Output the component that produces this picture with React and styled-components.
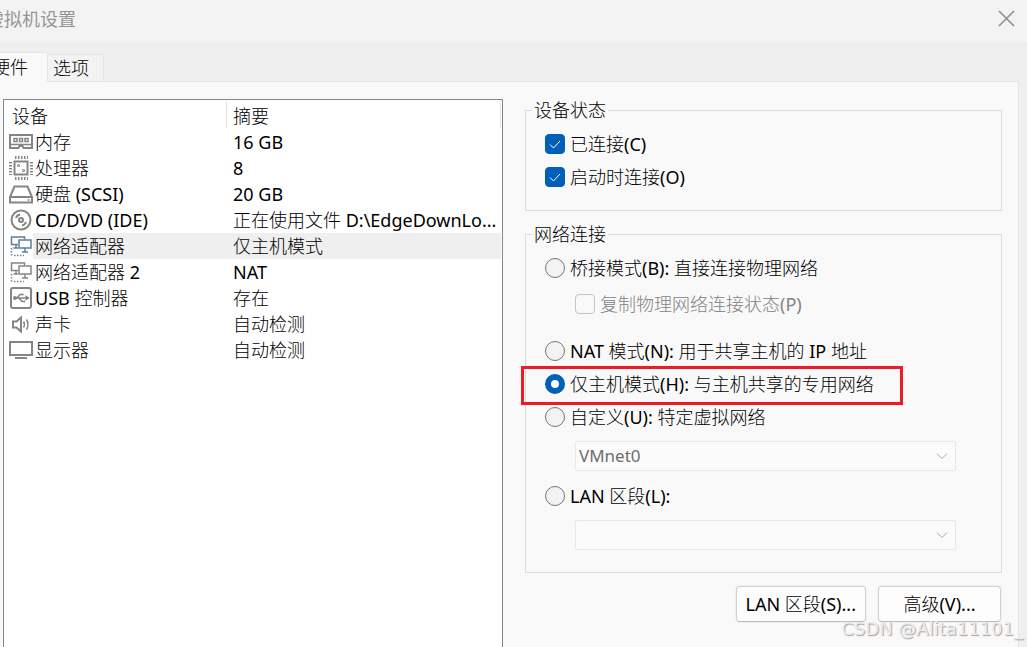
import React, { useState } from 'react';
import styled, { createGlobalStyle } from 'styled-components';

const uiFont = '"Noto Sans", "Noto Sans CJK SC Light", "Noto Sans CJK SC", sans-serif';
const line = '#dcdcdc';
const accent = '#005fb8';

const GlobalStyle = createGlobalStyle`
    * {
        box-sizing: border-box;
    }
    body {
        margin: 0;
        background-color: #efefef;
        color: #000;
        font-family: ${uiFont};
        font-size: 18px;
        line-height: 26px;
        overflow: hidden;
    }
    input, select, button {
        margin: 0;
        font: inherit;
        color: inherit;
    }
`;

const Dialog = styled.div`
    position: relative;
    display: flex;
    flex-direction: column;
    height: 100vh;
    margin-left: -16px;
`;

const TitleBar = styled.header`
    display: flex;
    align-items: center;
    justify-content: space-between;
    height: 41px;
    padding: 0 12px 4px 2px;
    background-color: #f3f3f3;
    color: #959595;
`;

const Title = styled.h1`
    margin: 0 0 2px;
    font-size: 18px;
    font-weight: 400;
    font-family: "Noto Sans CJK SC", sans-serif;
`;

const CloseButton = styled.button`
    display: flex;
    padding: 0;
    border: 0;
    background: none;
`;

const TabBar = styled.div`
    display: flex;
    align-items: flex-end;
    height: 41px;
    margin: 0 4px -1px;
    position: relative;
`;

const Tab = styled.button`
    height: ${props => props.$active ? 30 : 28}px;
    padding: 0 ${props => props.$active ? 19 : 14}px 0 ${props => props.$active ? 3 : 5}px;
    border: 1px solid #e5e5e5;
    border-left-width: ${props => props.$active ? 1 : 0}px;
    border-bottom-color: ${props => props.$active ? '#f9f9f9' : '#e5e5e5'};
    background-color: ${props => props.$active ? '#f9f9f9' : '#f3f3f3'};
`;

const Panel = styled.main`
    flex: 1;
    display: grid;
    grid-template-columns: minmax(0, 500fr) minmax(0, 477fr);
    column-gap: 22px;
    min-height: 0;
    margin: 0 8px 0 4px;
    padding: 17px 16px 0 14px;
    border: 1px solid #e5e5e5;
    border-bottom: 0;
    background-color: #f9f9f9;
`;

const DeviceList = styled.div`
    padding-right: 1px;
    border: 1px solid #828790;
    border-bottom: 0;
    background-color: #fff;
`;

const DeviceTable = styled.table`
    width: 100%;
    table-layout: fixed;
    border-collapse: collapse;
`;

const HeadCell = styled.th`
    width: ${props => props.$width || 'auto'};
    height: 29px;
    padding: 2px 6px 0 ${props => props.$indent}px;
    background: linear-gradient(#e5e5e5, #e5e5e5) right 1px / 1px 27px no-repeat;
    font-weight: 400;
    text-align: left;
`;

const DeviceRow = styled.tr`
    background: ${props => props.$selected ? 'linear-gradient(#efefef, #efefef) 29px 0 no-repeat' : 'none'};
    cursor: default;
`;

const Cell = styled.td`
    height: 26px;
    padding: 0 2px 0 ${props => props.$indent}px;
    overflow: hidden;
    white-space: nowrap;
    text-overflow: ellipsis;
`;

const DeviceName = styled.div`
    display: flex;
    align-items: center;
    gap: 2px;
    height: 26px;
`;

const DeviceIcon = styled.svg`
    flex: none;
    fill: none;
    stroke: ${props => props.$active ? '#5f7f9c' : '#858585'};
    stroke-width: 2;
`;

const Settings = styled.div`
    display: flex;
    flex-direction: column;
    gap: 12px;
`;

const Group = styled.fieldset`
    min-width: 0;
    margin: 0;
    padding: 0 6px ${props => props.$bottom}px;
    border: 1px solid ${line};
`;

const Legend = styled.legend`
    height: 22px;
    padding: 0 2px;
    line-height: 22px;
`;

const GroupBody = styled.div`
    display: flex;
    flex-direction: column;
    align-items: flex-start;
    padding: 6px 39px 0 13px;
`;

const Choice = styled.label`
    position: relative;
    display: flex;
    align-items: center;
    gap: 5px;
    height: 33px;
    white-space: nowrap;
    color: ${props => props.$disabled ? '#838383' : 'inherit'};
`;

const Nested = styled.div`
    align-self: stretch;
    padding: ${props => props.$pad} 0 ${props => props.$padBottom || '0'} 30px;
`;

const Highlight = styled.span`
    position: absolute;
    inset: -1px -29px -5px -24px;
    border: 3px solid #ed1c24;
    pointer-events: none;
`;

const Stack = styled.span`
    display: grid;
    align-items: center;

    > * {
        grid-area: 1 / 1;
    }
`;

const RadioInput = styled.input`
    appearance: none;
    width: 20px;
    height: 20px;
    border: 1px solid #767676;
    border-radius: 50%;
    background-color: #f3f3f3;

    &:checked {
        border: 6px solid ${accent};
        background-color: #fff;
    }
`;

const CheckInput = styled.input`
    appearance: none;
    width: 20px;
    height: 20px;
    border: 1px solid #767676;
    border-radius: 4px;
    background-color: #f9f9f9;

    &:checked {
        border-color: ${accent};
        background-color: ${accent};
    }
    &:disabled {
        border-color: #c5c5c5;
    }
`;

const Mark = styled.svg`
    fill: none;
    stroke: ${props => props.$color};
    pointer-events: none;
`;

const SelectInput = styled.select`
    appearance: none;
    width: 100%;
    height: 30px;
    padding: 0 30px 0 3px;
    border: 1px solid #e8e8e8;
    border-radius: 2px;
    background-color: #fbfbfb;
    color: #6d6d6d;
    font-size: 17px;
    opacity: 1;
`;

const Chevron = styled(Mark)`
    justify-self: end;
    margin-right: 8px;
`;

const Actions = styled.div`
    display: flex;
    justify-content: flex-end;
    gap: 12px;
    padding: 1px 1px 0 0;
`;

const ActionButton = styled.button`
    min-width: 123px;
    height: 36px;
    padding: 0 9px;
    border: 1px solid #d0d0d0;
    border-bottom-color: #bcbcbc;
    border-radius: 4px;
    background-color: #fdfdfd;
    box-shadow: 0 0 0 1px #f0f0f0;
`;

const Watermark = styled.div`
    position: absolute;
    right: 4px;
    bottom: 5px;
    color: #ececec;
    font-family: "DejaVu Sans", sans-serif;
    line-height: 26px;
    text-shadow: 1px 1px 1px #a0a0a0;
    pointer-events: none;
`;

const shapes = {
    memory: <>
        <path d="M1 6h22v13H14.500l-1-2h-3l-1 2H1z" />
        <path d="M5 9.500h3v3H5zM10.500 9.500h3v3h-3zM16 9.500h3v3h-3zM2 15.500h20" strokeWidth="1.5" />
    </>,
    cpu: <>
        <path d="M5.500 6.500h13v13h-13z" />
        <path d="M6 2.500h13M6 23.500h13M1.500 7v13M22.500 7v13" strokeWidth="3" strokeDasharray="1.5 1.5" />
        <circle cx="9.500" cy="10.500" r="0.500" />
        <circle cx="14.500" cy="15.500" r="0.500" />
    </>,
    disk: <>
        <path d="M5.500 5.500h13L23 16v5.500H1V16zM1 16h22" />
        <path d="M18.500 19h2" strokeWidth="1.5" />
    </>,
    disc: <>
        <circle cx="12" cy="13" r="9.500" />
        <circle cx="12" cy="13" r="2" />
        <path d="M7 11q1-3 4-3.500M17 15q-1 3-4 3.500" />
    </>,
    network: <>
        <path d="M9 11.500H2.500V4h13v2.500M7 11.500V15M4.500 15H9" strokeWidth="1.5" />
        <path d="M10 7h12v8H10zM16 15v3.500M13 19h6" strokeWidth="1.5" />
        <path d="M2.500 15v8M5 22.500h10" strokeWidth="1.5" strokeDasharray="1.5 1.5" />
    </>,
    usb: <>
        <rect x="2" y="3" width="20" height="20" rx="2" />
        <path d="M6 13h11M8 13l3-3.500h3M10 13l3 3.500h2" strokeWidth="1.5" />
        <circle cx="6" cy="13" r="1" />
        <path d="M13.500 9.500h1M15 16.500h1M17.500 12l1.500 1-1.500 1z" />
    </>,
    sound: <>
        <path d="M4 10.500h3.500l4.500-4v14l-4.500-4H4z" />
        <path d="M14.500 10.500q2 3 0 6M17.500 8.500q3 5 0 10" strokeWidth="1.5" />
    </>,
    display: <>
        <path d="M1 5h22v13H1z" />
        <path d="M6 21h12" />
    </>,
};

const devices = [
    { icon: 'memory', name: '内存', summary: '16 GB' },
    { icon: 'cpu', name: '处理器', summary: '8' },
    { icon: 'disk', name: '硬盘 (SCSI)', summary: '20 GB' },
    { icon: 'disc', name: 'CD/DVD (IDE)', summary: '正在使用文件 D:\\EdgeDownLo...' },
    { icon: 'network', name: '网络适配器', summary: '仅主机模式' },
    { icon: 'network', name: '网络适配器 2', summary: 'NAT' },
    { icon: 'usb', name: 'USB 控制器', summary: '存在' },
    { icon: 'sound', name: '声卡', summary: '自动检测' },
    { icon: 'display', name: '显示器', summary: '自动检测' },
];

const Check = ({ label, ...rest }) => (
    <Choice $disabled={rest.disabled}>
        <Stack>
            <CheckInput type="checkbox" {...rest} />
            {rest.defaultChecked && <Mark $color="#fff" width="20" height="20">
                <path d="M5 10.500l3.500 3.500 6.500-7" />
            </Mark>}
        </Stack>
        {label}
    </Choice>
);

const Select = ({ label, value }) => (
    <Stack>
        <SelectInput aria-label={label} disabled defaultValue={value}>
            <option value={value}>{value}</option>
        </SelectInput>
        <Chevron $color="#a8a8a8" width="12" height="12">
            <path d="M1 3.500l5 5 5-5" />
        </Chevron>
    </Stack>
);

const App = () => {
    const [ selected, setSelected ] = useState(4);
    const [ mode, setMode ] = useState('host');
    const radio = (value, label) => (
        <Choice>
            <RadioInput
                type="radio"
                name="mode"
                checked={mode === value}
                onChange={() => setMode(value)}
            />
            {label}
            {value === 'host' && <Highlight />}
        </Choice>
    );
    return <>
        <GlobalStyle />
        <Dialog>
            <TitleBar>
                <Title>虚拟机设置</Title>
                <CloseButton aria-label="关闭">
                    <Mark $color="#8c8c8c" width="17" height="17">
                        <path d="M1 1l15 15M16 1L1 16" strokeWidth="1.5" />
                    </Mark>
                </CloseButton>
            </TitleBar>
            <TabBar>
                <Tab $active>硬件</Tab>
                <Tab>选项</Tab>
            </TabBar>
            <Panel>
                <DeviceList>
                    <DeviceTable>
                        <thead>
                            <tr>
                                <HeadCell $width="223px" $indent={8}>设备</HeadCell>
                                <HeadCell $indent={6}>摘要</HeadCell>
                            </tr>
                        </thead>
                        <tbody>
                            {devices.map((device, i) => (
                                <DeviceRow
                                    key={device.name}
                                    $selected={i === selected}
                                    onClick={() => setSelected(i)}
                                >
                                    <Cell $indent={5}>
                                        <DeviceName>
                                            <DeviceIcon $active={i === selected} width="24" height="26">
                                                {shapes[device.icon]}
                                            </DeviceIcon>
                                            {device.name}
                                        </DeviceName>
                                    </Cell>
                                    <Cell $indent={6}>{device.summary}</Cell>
                                </DeviceRow>
                            ))}
                        </tbody>
                    </DeviceTable>
                </DeviceList>
                <Settings>
                    <Group $bottom={17}>
                        <Legend>设备状态</Legend>
                        <GroupBody>
                            <Check label="已连接(C)" defaultChecked />
                            <Check label="启动时连接(O)" defaultChecked />
                        </GroupBody>
                    </Group>
                    <Group $bottom={22}>
                        <Legend>网络连接</Legend>
                        <GroupBody>
                            {radio('bridge', '桥接模式(B): 直接连接物理网络')}
                            <Nested $pad="3px" $padBottom="14px">
                                <Check label="复制物理网络连接状态(P)" disabled />
                            </Nested>
                            {radio('nat', 'NAT 模式(N): 用于共享主机的 IP 地址')}
                            {radio('host', '仅主机模式(H): 与主机共享的专用网络')}
                            {radio('custom', '自定义(U): 特定虚拟网络')}
                            <Nested $pad="8px" $padBottom="8px">
                                <Select label="特定虚拟网络" value="VMnet0" />
                            </Nested>
                            {radio('lan', 'LAN 区段(L):')}
                            <Nested $pad="8px">
                                <Select label="LAN 区段" value="" />
                            </Nested>
                        </GroupBody>
                    </Group>
                    <Actions>
                        <ActionButton>LAN 区段(S)...</ActionButton>
                        <ActionButton>高级(V)...</ActionButton>
                    </Actions>
                </Settings>
            </Panel>
            <Watermark>CSDN @Alita11101_</Watermark>
        </Dialog>
    </>;
};

export default App;
